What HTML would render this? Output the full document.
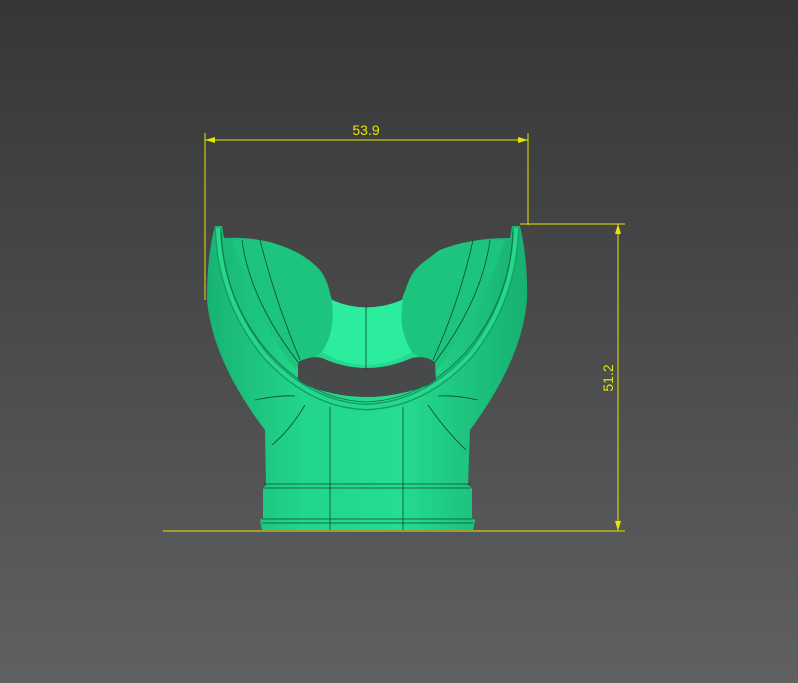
<!DOCTYPE html>
<html><head><meta charset="utf-8"><style>
html,body{margin:0;padding:0;width:798px;height:683px;overflow:hidden}
svg{display:block}
</style></head><body>
<svg width="798" height="683" viewBox="0 0 798 683" xmlns="http://www.w3.org/2000/svg">
<defs>
<linearGradient id="bg" x1="0" y1="0" x2="0" y2="1">
<stop offset="0" stop-color="#363636"/><stop offset="1" stop-color="#5f6062"/>
</linearGradient>
<linearGradient id="body" x1="0" y1="0" x2="1" y2="0">
<stop offset="0" stop-color="#18b373"/><stop offset="0.3" stop-color="#22d68b"/><stop offset="0.6" stop-color="#25dc90"/><stop offset="1" stop-color="#17b070"/>
</linearGradient>
</defs>
<rect width="798" height="683" fill="url(#bg)"/>
<path d="M215,226 L222,226 L224,238 Q270,236 300,255 Q325,275 332,300 Q366,315 402,300 Q410,270 440,250 Q470,238 510,238 L512,226 L520,226 Q528,260 527,300 Q522,360 470,430 L468,485 L472,488 L472,518 L475,520 L473,530 L262,530 L260,520 L263,518 L263,488 L266,485 L265,430 Q212,360 207,300 Q207,255 215,226 Z" fill="url(#body)"/>
<!-- wing faces -->
<path d="M232,240 Q290,238 320,270 Q335,290 332,330 Q330,345 322,352 Q300,365 296,370 Q255,320 232,240 Z" fill="#1cc47e"/>
<path d="M505,240 Q445,238 415,270 Q400,290 402,330 Q404,345 412,352 Q432,365 436,370 Q480,320 505,240 Z" fill="#1cc47e"/>
<!-- saddle -->
<path d="M332,300 Q366,315 402,300 Q398,330 412,352 Q366,378 322,352 Q336,330 332,300 Z" fill="#2cec9e"/>
<!-- hole -->
<path d="M298,362 Q312,355 322,358 Q366,378 412,358 Q425,355 435,362 L436,382 Q366,412 298,382 Z" fill="#48494a"/>
<!-- rim -->
<path d="M218,228 Q220,300 265,355 Q310,405 366,407 Q424,405 470,355 Q514,300 516,228" fill="none" stroke="#15a066" stroke-width="7"/>
<path d="M218,228 Q220,300 265,355 Q310,405 366,407 Q424,405 470,355 Q514,300 516,228" fill="none" stroke="#24d88c" stroke-width="4"/>
<path d="M221,232 Q224,300 268,352 Q312,400 366,402 Q422,400 466,352 Q510,300 513,232" fill="none" stroke="#0e6d45" stroke-width="0.8"/>
<!-- lines -->
<g stroke="#0b4a30" stroke-width="0.8" fill="none">
<line x1="330" y1="407" x2="330" y2="530"/>
<line x1="403" y1="407" x2="403" y2="530"/>
<line x1="366" y1="305" x2="366" y2="372"/>
<path d="M242,240 Q250,300 298,362"/>
<path d="M260,240 Q275,300 300,360"/>
<path d="M490,240 Q482,300 435,362"/>
<path d="M473,240 Q460,300 433,360"/>
<path d="M305,405 Q290,430 272,445"/>
<path d="M428,405 Q445,430 466,450"/>
<path d="M255,400 Q280,395 295,396"/>
<path d="M478,400 Q455,395 438,396"/>
<line x1="263" y1="484" x2="471" y2="484"/>
<line x1="263" y1="488" x2="471" y2="488"/>
<line x1="262" y1="519" x2="473" y2="519"/>
<line x1="262" y1="523" x2="473" y2="523"/>
</g>
<!-- dimensions -->
<g stroke="#e6e600" stroke-width="1" fill="none">
<line x1="205" y1="133" x2="205" y2="300"/>
<line x1="528" y1="133" x2="528" y2="225"/>
<line x1="205" y1="140" x2="528" y2="140"/>
<line x1="520" y1="224" x2="625" y2="224"/>
<line x1="163" y1="531" x2="625" y2="531"/>
<line x1="618" y1="224" x2="618" y2="531"/>
</g>
<g fill="#e6e600">
<path d="M205,140 L215,137 L215,143 Z"/>
<path d="M528,140 L518,137 L518,143 Z"/>
<path d="M618,224 L615,234 L621,234 Z"/>
<path d="M618,531 L615,521 L621,521 Z"/>
<text x="366" y="135" font-family="Liberation Sans, sans-serif" font-size="14" text-anchor="middle">53.9</text>
<text transform="translate(613,378) rotate(-90)" font-family="Liberation Sans, sans-serif" font-size="14" text-anchor="middle">51.2</text>
</g>
</svg>
</body></html>
